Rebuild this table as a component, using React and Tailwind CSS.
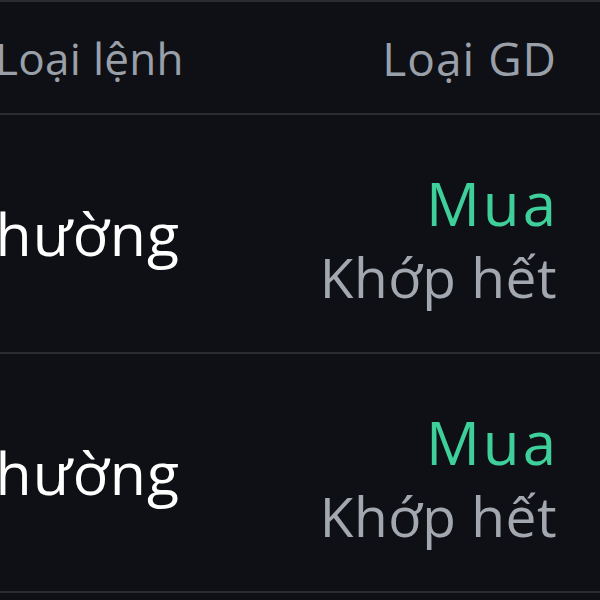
export default function App() {
  const rows = [0, 1];
  return (
    <div className="w-[600px] h-[600px] overflow-hidden bg-[#0f1015]" style={{ fontFamily: "'Open Sans', 'Noto Sans', sans-serif" }}>
      <div className="h-[2px] bg-[#2a2c31]" />
      <div className="h-[113px] flex items-center justify-between pr-[44px] border-b-[2px] border-[#2a2c31]">
        <span className="ml-[-5px] text-[44px] text-[#9aa0a9] leading-none tracking-[0.3px]">Loại lệnh</span>
        <span className="mr-[-1px] text-[46px] text-[#9aa0a9] leading-none tracking-[1px]">Loại GD</span>
      </div>
      {rows.map((r) => (
        <div key={r} className="h-[239px] flex items-center justify-between pr-[44px] border-b-[2px] border-[#2a2c31]">
          <span className="ml-[-38px] text-[59px] text-white leading-none tracking-[1px]">Thường</span>
          <div className="flex flex-col items-end pt-[12px]">
            <span className="mr-[-3px] text-[60px] text-[#3ecf9a] leading-[74px] tracking-[3px]">Mua</span>
            <span className="mr-[-1px] text-[55px] text-[#a3a7b0] leading-[74px] tracking-[0.5px]">Khớp hết</span>
          </div>
        </div>
      ))}
    </div>
  );
}
